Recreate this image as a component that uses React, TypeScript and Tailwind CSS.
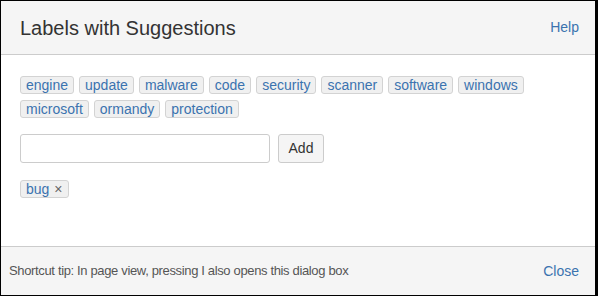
const SUGGESTIONS = [
  'engine',
  'update',
  'malware',
  'code',
  'security',
  'scanner',
  'software',
  'windows',
  'microsoft',
  'ormandy',
  'protection',
];

function Tag({ children }: { children: React.ReactNode }) {
  return (
    <span className="inline-flex h-[18px] items-center rounded-[3px] border border-[#d3d3d3] bg-[#f0f0f0] px-[5px] text-[14px] leading-none text-[#3b73af]">
      {children}
    </span>
  );
}

export default function App() {
  return (
    <div
      className="flex h-[296px] w-[598px] flex-col border-t border-b border-l border-r-[3px] border-black bg-white text-[#333]"
      style={{ fontFamily: '"Liberation Sans", Arial, sans-serif' }}
    >
      <div className="flex h-[54px] shrink-0 items-center justify-between border-b border-[#cccccc] bg-[#f5f5f5] pl-[19px] pr-[16px]">
        <h1 className="text-[20px] font-normal text-[#333]">Labels with Suggestions</h1>
        <a className="text-[14px] text-[#3b73af]">Help</a>
      </div>

      <div className="flex-1 pl-[19px] pr-[60px] pt-[21px]">
        <div className="flex flex-wrap gap-x-[5px] gap-y-[6px]">
          {SUGGESTIONS.map((s) => (
            <Tag key={s}>{s}</Tag>
          ))}
        </div>

        <div className="mt-[16px] flex items-center gap-[8px]">
          <input
            className="h-[29px] w-[250px] rounded-[3px] border border-[#cccccc] bg-white px-2 text-[14px] outline-none"
            type="text"
          />
          <button className="h-[29px] w-[46px] rounded-[3px] border border-[#cccccc] bg-[#f5f5f5] text-[14px] text-[#333]">
            Add
          </button>
        </div>

        <div className="mt-[17px] flex">
          <Tag>
            bug
            <span className="ml-[5px] text-[14px] text-[#666]">×</span>
          </Tag>
        </div>
      </div>

      <div className="flex h-[49px] shrink-0 items-center justify-between border-t border-[#cccccc] bg-[#f5f5f5] pl-[8px] pr-[16px]">
        <span className="text-[13px] tracking-[-0.35px] text-[#555]">
          Shortcut tip: In page view, pressing I also opens this dialog box
        </span>
        <a className="text-[14px] text-[#3b73af]">Close</a>
      </div>
    </div>
  );
}
